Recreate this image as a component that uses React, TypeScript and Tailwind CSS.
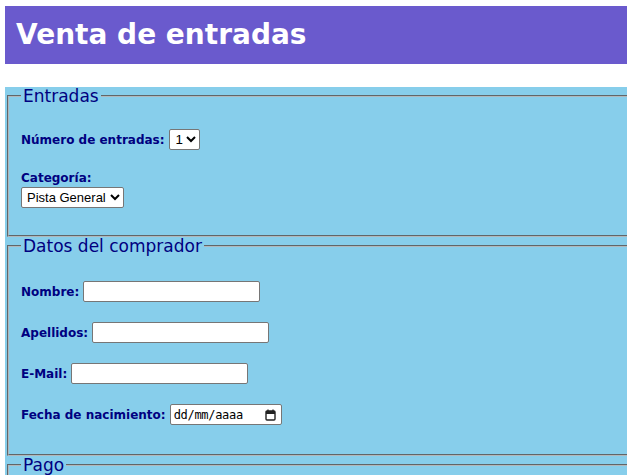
import type { ReactNode } from 'react';

const label = 'font-["DejaVu_Sans",sans-serif] text-[12px] font-bold text-[#000080]';
const field = 'h-[21px] rounded-[2px] border border-[#767676] bg-white';

function Fieldset({ title, children, className = '' }: { title: string; children?: ReactNode; className?: string }) {
  return (
    <fieldset className={`mx-[2px] border-2 border-[#b0b8bc] [border-style:groove] pl-[12px] pr-3 ${className}`}>
      <legend className='px-[2px] font-["DejaVu_Sans",sans-serif] text-[17px] leading-[18px] text-[#000080]'>{title}</legend>
      {children}
    </fieldset>
  );
}

function Row({ text, children }: { text: string; children: ReactNode }) {
  return (
    <div className="flex h-[21px] items-center gap-[4px]">
      <span className={label}>{text}</span>
      {children}
    </div>
  );
}

function TextBox({ width }: { width: string }) {
  return <input type="text" className={`${field} ${width} px-1 text-[13px] outline-none`} />;
}

export default function App() {
  return (
    <div className="h-[475px] overflow-hidden bg-white pt-[6px] pl-[5px]">
      <div className="w-[700px]">
        <h1 className='flex h-[58px] items-center bg-[#6a5acd] pl-[11px] font-["DejaVu_Sans",sans-serif] text-[28px] font-bold text-white'>
          Venta de entradas
        </h1>

        <div className="mt-[23px] bg-[#87ceeb] pb-4">
          <Fieldset title="Entradas" className="pb-[27px]">
            <div className="mt-[24px]">
              <Row text="Número de entradas:">
                <select className={`${field} w-[31px] pl-[2px] font-["Liberation_Sans",sans-serif] text-[13.33px] text-black`}>
                  <option>1</option>
                </select>
              </Row>
            </div>
            <div className={`${label} mt-[20px] leading-[16px]`}>Categoría:</div>
            <select className={`${field} mt-[1px] block w-[103px] pl-[1px] font-["Liberation_Sans",sans-serif] text-[13px] text-black`}>
              <option>Pista General</option>
            </select>
          </Fieldset>

          <Fieldset title="Datos del comprador" className="pb-[29px]">
            <div className="mt-[26px] flex flex-col gap-[20px]">
              <Row text="Nombre:">
                <TextBox width="w-[177px]" />
              </Row>
              <Row text="Apellidos:">
                <TextBox width="w-[177px]" />
              </Row>
              <Row text="E-Mail:">
                <TextBox width="w-[177px]" />
              </Row>
              <Row text="Fecha de nacimiento:">
                <div className={`${field} flex w-[112px] items-center justify-between pl-[3px] pr-[5px]`}>
                  <span className='font-["DejaVu_Sans_Mono",monospace] text-[12px] tracking-[-0.3px] text-black'>dd/mm/aaaa</span>
                  <svg width="11" height="12" viewBox="0 0 11 12" fill="none">
                    <rect x="1" y="2" width="9" height="9" rx="1" stroke="#222" strokeWidth="1.4" />
                    <rect x="1" y="2" width="9" height="3" fill="#222" />
                    <line x1="3" y1="0.5" x2="3" y2="2.5" stroke="#222" strokeWidth="1.3" />
                    <line x1="8" y1="0.5" x2="8" y2="2.5" stroke="#222" strokeWidth="1.3" />
                  </svg>
                </div>
              </Row>
            </div>
          </Fieldset>

          <Fieldset title="Pago" className="h-[60px]" />
        </div>
      </div>
    </div>
  );
}
